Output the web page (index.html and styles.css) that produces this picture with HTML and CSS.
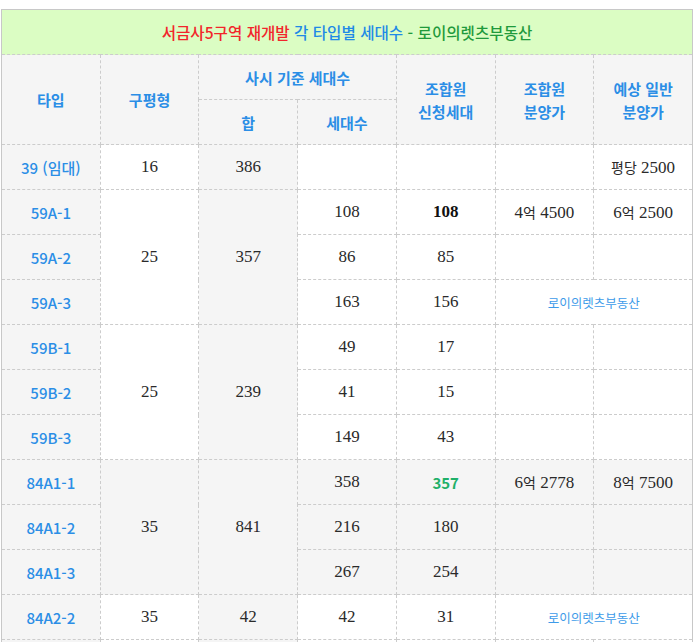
FILE: index.html
```html
<!DOCTYPE html>
<html lang="ko">
<head>
<meta charset="utf-8">
<title>서금사5구역 재개발 각 타입별 세대수</title>
<link rel="stylesheet" href="styles.css">
</head>
<body>
<table class="units">
  <colgroup>
    <col><col><col><col><col><col><col>
  </colgroup>
  <thead>
    <tr class="title-row">
      <th colspan="7" class="title"><span class="t-red">서금사5구역 재개발</span> <span class="t-blue">각 타입별 세대수</span> <span class="t-green">- 로이의렛츠부동산</span></th>
    </tr>
    <tr>
      <th rowspan="2">타입</th>
      <th rowspan="2">구평형</th>
      <th colspan="2">사시 기준 세대수</th>
      <th rowspan="2">조합원<br>신청세대</th>
      <th rowspan="2">조합원<br>분양가</th>
      <th rowspan="2">예상 일반<br>분양가</th>
    </tr>
    <tr>
      <th>합</th>
      <th>세대수</th>
    </tr>
  </thead>
  <tbody>
    <tr>
      <td class="type">39 (임대)</td>
      <td>16</td>
      <td class="sum">386</td>
      <td></td>
      <td></td>
      <td></td>
      <td><span class="ko">평당</span> 2500</td>
    </tr>
    <tr>
      <td class="type">59A-1</td>
      <td rowspan="3">25</td>
      <td rowspan="3" class="sum">357</td>
      <td>108</td>
      <td class="strong">108</td>
      <td>4<span class="ko">억</span> 4500</td>
      <td>6<span class="ko">억</span> 2500</td>
    </tr>
    <tr>
      <td class="type">59A-2</td>
      <td>86</td>
      <td>85</td>
      <td></td>
      <td></td>
    </tr>
    <tr>
      <td class="type">59A-3</td>
      <td>163</td>
      <td>156</td>
      <td colspan="2" class="link">로이의렛츠부동산</td>
    </tr>
    <tr>
      <td class="type">59B-1</td>
      <td rowspan="3">25</td>
      <td rowspan="3" class="sum">239</td>
      <td>49</td>
      <td>17</td>
      <td></td>
      <td></td>
    </tr>
    <tr>
      <td class="type">59B-2</td>
      <td>41</td>
      <td>15</td>
      <td></td>
      <td></td>
    </tr>
    <tr>
      <td class="type">59B-3</td>
      <td>149</td>
      <td>43</td>
      <td></td>
      <td></td>
    </tr>
    <tr class="shade">
      <td class="type">84A1-1</td>
      <td rowspan="3">35</td>
      <td rowspan="3" class="sum">841</td>
      <td>358</td>
      <td class="green">357</td>
      <td>6<span class="ko">억</span> 2778</td>
      <td>8<span class="ko">억</span> 7500</td>
    </tr>
    <tr class="shade">
      <td class="type">84A1-2</td>
      <td>216</td>
      <td>180</td>
      <td></td>
      <td></td>
    </tr>
    <tr class="shade">
      <td class="type">84A1-3</td>
      <td>267</td>
      <td>254</td>
      <td></td>
      <td></td>
    </tr>
    <tr>
      <td class="type">84A2-2</td>
      <td>35</td>
      <td class="sum">42</td>
      <td>42</td>
      <td>31</td>
      <td colspan="2" class="link">로이의렛츠부동산</td>
    </tr>
    <tr>
      <td class="type"></td>
      <td></td>
      <td class="sum"></td>
      <td></td>
      <td></td>
      <td></td>
      <td></td>
    </tr>
  </tbody>
</table>
</body>
</html>
```
FILE: styles.css
```css
html, body {
  margin: 0;
  padding: 0;
  background: #ffffff;
}

body {
  padding: 9px 0 0 1px;
  font-family: "Noto Sans CJK KR", "Noto Sans", sans-serif;
}

.units {
  width: 692px;
  table-layout: fixed;
  border-collapse: collapse;
  border: 1px solid #c8c8c8;
}

.units th,
.units td {
  border: 1px dashed #cccccc;
  padding: 0;
  height: 44px;
  text-align: center;
  vertical-align: middle;
}

.units th {
  background: #f5f5f5;
  color: #2b8ee6;
  font-size: 15px;
  font-weight: 700;
  line-height: 23px;
}

.units .title-row .title {
  background: #dbfdc3;
  font-size: 15.6px;
  font-weight: 500;
  line-height: 20px;
  border-top: 1px solid #c8c8c8;
  border-left: 1px solid #c8c8c8;
  border-right: 1px solid #c8c8c8;
}

.t-red { color: #f2262b; }
.t-blue { color: #1f8ae6; }
.t-green { color: #1f9a3c; }

.units td {
  font-family: "Liberation Serif", "Noto Sans CJK KR", serif;
  font-size: 17px;
  color: #2a2a2a;
  background: #ffffff;
}

.units td .ko {
  font-family: "Noto Sans CJK KR", sans-serif;
  font-size: 14px;
  font-weight: 400;
}

.units td.type {
  font-family: "Noto Sans CJK KR", "Noto Sans", sans-serif;
  font-size: 15px;
  font-weight: 500;
  color: #2b8ee6;
  background: #f5f5f5;
}

.units td.sum {
  background: #f5f5f5;
}

.units tr.shade td {
  background: #f5f5f5;
}

.units td.strong {
  font-weight: 700;
  color: #111111;
}

.units td.green {
  color: #1fb069;
  font-weight: 700;
  font-family: "Noto Sans CJK KR", "Noto Sans", sans-serif;
  font-size: 15px;
}

.units td.link {
  font-family: "Noto Sans CJK KR", "Noto Sans", sans-serif;
  font-size: 12.5px;
  color: #3d9be9;
}
```
